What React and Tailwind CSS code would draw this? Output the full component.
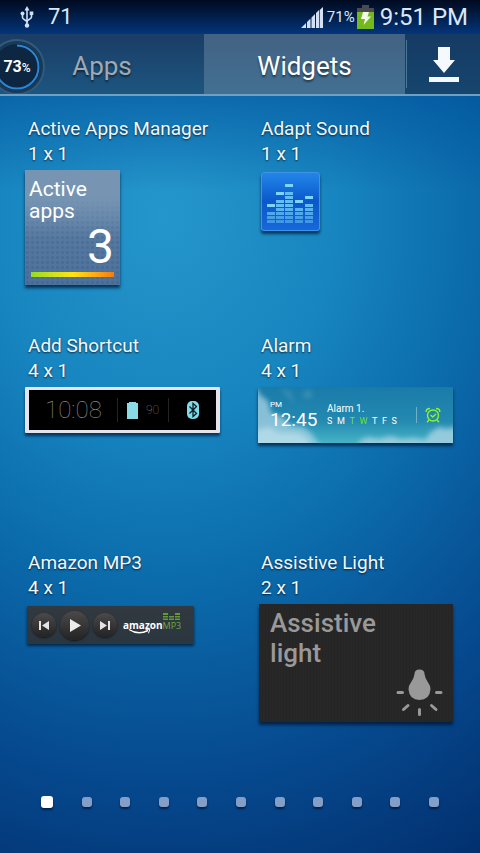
import { useState } from "react";

// Lit segments per column of the equalizer, as top offsets in the 60x60 icon
const EQ_COLUMNS = [
    { x: 7,  cells: [32, 40, 44, 48] },
    { x: 16, cells: [20, 28, 32, 36, 40, 44, 48] },
    { x: 25, cells: [12, 20, 24, 28, 32, 36, 40, 44, 48] },
    { x: 35, cells: [28, 36, 40, 44, 48] },
    { x: 45, cells: [24, 32, 36, 40, 44, 48] },
];

const DAYS = [
    { id: "sun", label: "S", on: false },
    { id: "mon", label: "M", on: false },
    { id: "tue", label: "T", on: true },
    { id: "wed", label: "W", on: true },
    { id: "thu", label: "T", on: false },
    { id: "fri", label: "F", on: false },
    { id: "sat", label: "S", on: false },
];

const PAGES = Array.from({ length: 11 }, (_, i) => i);

function UsbIcon() {
    return (
        <svg viewBox="0 0 14 22" className="w-[14px] h-[22px]" fill="none" stroke="#cfe0f5" strokeWidth="1.6">
            <path d="M7 4v15" />
            <path d="M2.5 8v3.5c0 2.500 4.500 2 4.500 5M11.500 8v3c0 2.500-4.500 2-4.500 5" />
            <path d="M7 0l2.500 4.500h-5z" fill="#cfe0f5" stroke="none" />
            <circle cx="2.500" cy="7.500" r="2" fill="#cfe0f5" stroke="none" />
            <path d="M9.700 5.500h3.600v3.600h-3.600z" fill="#cfe0f5" stroke="none" />
            <circle cx="7" cy="19.500" r="2.200" fill="#cfe0f5" stroke="none" />
        </svg>
    );
}

function SignalIcon() {
    return (
        <svg viewBox="0 0 22 21" className="w-[22px] h-[21px]" fill="#d3dff2">
            <path d="M0 21l5-5v5zM6 15l3.500-3.500V21H6zM10.500 10.500L14 7v14h-3.500zM15 6l3-3v18h-3zM18.700 3L22 0v21h-3.300z" />
        </svg>
    );
}

function BatteryIcon() {
    return (
        <svg viewBox="0 0 17 24" className="w-[17px] h-6">
            <path d="M5 0h7v3h5v4H0V3h5z" fill="#4a4a50" />
            <path d="M0 7h17v17H0z" fill="#73b81f" />
            <path d="M6 7h6l-1.500 4.500H14L6.500 20l1.500-6H4z" fill="#f2fbe8" />
        </svg>
    );
}

function StatusBar() {
    return (
        <header className="flex h-[34px] items-center bg-linear-to-b from-[#000b20] to-[#04357b] pl-5 pr-3 text-[#dbe7f8]">
            <UsbIcon />
            <span className="ml-[14px] text-[22px] leading-6">71</span>
            <div className="ml-auto flex items-center">
                <SignalIcon />
                <span className="ml-1 mr-[2px] text-[15px]">71%</span>
                <BatteryIcon />
                <span className="ml-[6px] text-2xl">9:51 PM</span>
            </div>
        </header>
    );
}

function Gauge() {
    return (
        <div className="absolute -left-[11px] top-[5px] flex size-14 items-center justify-center">
            <svg viewBox="0 0 56 56" className="absolute inset-0 size-14">
                <circle cx="28" cy="28" r="27" fill="#173a58" stroke="#335a7a" strokeWidth="2" />
                <circle cx="28" cy="28" r="23" fill="#0d2641" />
                <path d="M28 6.500A21.500 21.500 0 1 1 6.500 28" fill="none" stroke="#2c86d4" strokeWidth="2" />
            </svg>
            <span className="relative text-base font-bold text-white">
                73<span className="text-xs font-medium">%</span>
            </span>
        </div>
    );
}

function TabBar({ tab, onSelect }) {
    const base = "flex items-center justify-center pt-1 text-[26px] [text-shadow:0_2px_2px_rgba(0,0,0,0.5)] ";
    const on = "bg-[#7491a8]/45 text-white";
    const off = "text-[#9fa9b4]";

    return (
        <nav className="relative grid h-[62px] grid-cols-[204fr_201fr_75fr] overflow-hidden border-b-2 border-[#6f9fc2] bg-linear-to-b from-[#1a3d65] to-[#1c5680]">
            <button type="button" onClick={() => onSelect("apps")} className={base + (tab === "apps" ? on : off)}>
                Apps
            </button>
            <button type="button" onClick={() => onSelect("widgets")} className={base + (tab === "widgets" ? on : off)}>
                Widgets
            </button>
            <div className="flex items-center bg-[#123a63]/60">
                <span className="ml-px h-12 w-px bg-[#4c7698]" />
                <button type="button" aria-label="Downloaded apps" className="flex flex-1 justify-center">
                    <svg viewBox="0 0 30 36" className="h-9 w-[30px]" fill="#f5f9fd">
                        <path d="M9 1h12v13h5L15 27 4 14h5z" />
                        <path d="M0 31h30v5H0z" />
                    </svg>
                </button>
            </div>
            <Gauge />
        </nav>
    );
}

function ActiveApps() {
    return (
        <div className="mt-1 flex h-[115px] w-[95px] flex-col bg-[#54779f] bg-[linear-gradient(#7795b3_20%,transparent_60%),radial-gradient(rgba(30,60,110,0.16)_1px,transparent_2px),linear-gradient(#7795b3,#587aa1_50%,#4c719a)] bg-[size:100%_100%,5px_5px,100%_100%] px-1 pt-2 text-white shadow-[0_3px_3px_rgba(0,20,50,0.75)]">
            <p className="text-[21px] leading-[22px]">Active<br />apps</p>
            <p className="pr-[2px] text-right text-5xl leading-[50px]">3</p>
            <div className="ml-[2px] h-[5px] w-[83px] bg-linear-to-r from-[#93dc22] via-[#ffe311] to-[#f47a12]" />
        </div>
    );
}

function AdaptSound() {
    return (
        <div className="ml-[3px] mt-[6px] size-[59px] rounded-[3px] border border-[#3d92ea] bg-linear-to-b from-[#2385e8] via-[#0b58cb] to-[#1768d8] shadow-[0_3px_3px_rgba(0,20,50,0.7)]">
            <svg viewBox="1 1 57 57" className="size-full">
                {EQ_COLUMNS.map(col => col.cells.map((y, i) => (
                    <rect
                        key={`${col.x}-${y}`}
                        x={col.x - 1}
                        y={y}
                        width="8"
                        height="3"
                        fill={i === 0 ? "#7fd4fb" : "#62bdf4"}
                        opacity={y < 36 ? 1 : 1 - (y - 32) / 38}
                    />
                )))}
            </svg>
        </div>
    );
}

function AddShortcut() {
    return (
        <div className="mt-1 flex h-[46px] items-center rounded-[1px] border-x-4 border-y-[3px] border-[#e6e4ea] bg-black shadow-[0_3px_3px_rgba(0,20,50,0.7)]">
            <span className="flex-1 pl-4 font-thin text-2xl text-[#8a8a8a]">10:08</span>
            <span className="h-6 w-px bg-[#242424]" />
            <div className="flex w-[50px] items-center justify-center gap-2">
                <svg viewBox="0 0 11 17" className="h-[17px] w-[11px]" fill="#8bdbe6">
                    <path d="M2 0h7v1h2v16H0V1h2z" />
                </svg>
                <span className="font-thin text-xs text-[#858585]">90</span>
            </div>
            <span className="h-6 w-px bg-[#242424]" />
            <div className="flex w-[47px] justify-center">
                <svg viewBox="0 0 12 18" className="h-[18px] w-3">
                    <rect width="12" height="18" rx="5" fill="#7edbea" />
                    <path d="M2.500 5.500l7 7L6 15.500v-13l3.500 3-7 7" fill="none" stroke="#0a1c20" strokeWidth="1.300" />
                </svg>
            </div>
        </div>
    );
}

function Sky() {
    return (
        <svg viewBox="0 0 194 56" preserveAspectRatio="none" className="absolute inset-0 size-full">
            <defs>
                <linearGradient id="sky" x1="0" y1="0" x2="0" y2="1">
                    <stop offset="0" stopColor="#1a7ba9" />
                    <stop offset="0.6" stopColor="#2389b0" />
                    <stop offset="1" stopColor="#45b3c5" />
                </linearGradient>
                <filter id="soft" x="-20%" y="-20%" width="140%" height="140%">
                    <feGaussianBlur stdDeviation="2.500" />
                </filter>
            </defs>
            <path d="M0 0h194v56H0z" fill="url(#sky)" />
            <g filter="url(#soft)" fill="#a9d3e3">
                <path d="M-8 0q8 0 10 8l8 6 3 12 12 4 6 8 14 2 8 6 4 6 6 8H-8z" opacity="0.750" />
                <path d="M98 62l4-9 8-3 10 2 12-3 10 3 14-1 10 2 6-8 8-5 8 2 6-2 6 2v22z" opacity="0.800" />
                <path d="M-4 44l14-4 12 6 16 0 12 6v10H-4z" fill="#d2e9f1" opacity="0.500" />
                <path d="M22 2l10 2 4 14-6-8zM44 6l8-4 2 8-6 2z" opacity="0.200" />
            </g>
        </svg>
    );
}

function Alarm() {
    return (
        <div className="relative mt-1 h-14 overflow-hidden shadow-[0_3px_3px_rgba(0,20,50,0.7)]">
            <Sky />
            <div className="relative flex h-full items-center pl-3 text-white">
                <div className="w-[57px]">
                    <p className="text-[8px] leading-[10px]">PM</p>
                    <p className="text-[19px] leading-5">12:45</p>
                </div>
                <div className="flex-1">
                    <p className="text-[10px] leading-3">Alarm 1.</p>
                    <p className="flex w-[70px] justify-between text-[9px] leading-3">
                        {DAYS.map(d => (
                            <span key={d.id} className={d.on ? "text-[#6be32a]" : ""}>{d.label}</span>
                        ))}
                    </p>
                </div>
                <span className="h-4 w-px bg-[#6fb0cb]" />
                <svg viewBox="0 0 16 16" className="ml-2 mr-3 size-4" fill="none" stroke="#8cf52a" strokeWidth="1.400">
                    <circle cx="8" cy="8.500" r="5.500" />
                    <path d="M5.500 8l2.200 2L11 7M1.200 5Q1 1.500 5 1.500M14.800 5Q15 1.500 11 1.500M4 13l-2 2.300M12 13l2 2.300" />
                </svg>
            </div>
        </div>
    );
}

function AmazonLogo() {
    return (
        <div className="relative ml-[6px] flex items-baseline pt-px leading-4 font-['Open_Sans',sans-serif]">
            <span className="text-[10px] font-bold text-white">amazon</span>
            <span className="text-[9px] text-[#6dab3c]">MP3</span>
            <svg viewBox="0 0 60 24" className="absolute -top-1 left-0 h-6 w-[60px]">
                <path d="M6 17.500q9 6 19 1" fill="none" stroke="#fff" strokeWidth="1.400" />
                <path d="M22.500 17.300h4.300l-1.300 4" fill="none" stroke="#fff" strokeWidth="1" />
                <path d="M40 1h5v2h-5zM40 4h5v1.500h-5zM40 6.500h5V8h-5zM46 4h5v1.500h-5zM46 6.500h5V8h-5zM52 1h5v2h-5zM52 4h5v1.500h-5zM52 6.500h5V8h-5z" fill="#5f9a37" />
            </svg>
        </div>
    );
}

function AmazonMp3() {
    const knob = "flex items-center justify-center rounded-full bg-linear-to-b from-[#4b494a] to-[#252425] shadow-[0_1px_2px_rgba(0,0,0,0.6)] ";

    return (
        <div className="ml-[2px] mt-[6px] flex h-[38px] w-[167px] items-center rounded-[1px] bg-linear-to-b from-[#32393f] to-[#2a3640] pl-[5px] shadow-[0_2px_3px_rgba(0,15,40,0.7)]">
            <button type="button" aria-label="Previous" className={knob + "size-6"}>
                <svg viewBox="0 0 10 9" className="h-[9px] w-[10px]" fill="#e4e4e4">
                    <path d="M0 0h2v9H0zM10 0v9L3 4.500z" />
                </svg>
            </button>
            <button type="button" aria-label="Play" className={knob + "ml-1 size-[29px]"}>
                <svg viewBox="0 0 11 13" className="ml-[2px] h-[13px] w-[11px]" fill="#ececec">
                    <path d="M0 0l11 6.500L0 13z" />
                </svg>
            </button>
            <button type="button" aria-label="Next" className={knob + "ml-1 size-6"}>
                <svg viewBox="0 0 10 9" className="h-[9px] w-[10px]" fill="#e4e4e4">
                    <path d="M0 0l7 4.500L0 9zM8 0h2v9H8z" />
                </svg>
            </button>
            <AmazonLogo />
        </div>
    );
}

function AssistiveLight() {
    return (
        <div className="relative ml-px mt-1 h-[118px] bg-[#272727] bg-[repeating-linear-gradient(90deg,rgba(0,0,0,0.06)_0_1px,transparent_1px_3px)] px-[11px] pt-1 shadow-[0_3px_3px_rgba(0,15,40,0.7)]">
            <p className="text-[26px] leading-[30px] font-medium text-[#999]">Assistive<br />light</p>
            <svg viewBox="0 0 48 48" className="absolute bottom-[6px] right-[9px] size-12" fill="#999">
                <path d="M18.500 6q0-4.500 5-4.500T28.500 6q.5 4 3 7.500 3 4 3 8-1 10.500-11 10.500t-11-10.500q0-4 3-8Q18 10 18.500 6z" />
                <path d="M2 24.500h4.500M40.500 24.500H45M12 37.500l-4.500 4M35.500 37.500l4.500 4M23.500 41.500v5" fill="none" stroke="#999" strokeWidth="3" strokeLinecap="round" />
            </svg>
        </div>
    );
}

const WIDGETS = [
    { name: "Active Apps Manager", size: "1 x 1", Preview: ActiveApps },
    { name: "Adapt Sound",         size: "1 x 1", Preview: AdaptSound },
    { name: "Add Shortcut",        size: "4 x 1", Preview: AddShortcut },
    { name: "Alarm",               size: "4 x 1", Preview: Alarm },
    { name: "Amazon MP3",          size: "4 x 1", Preview: AmazonMp3 },
    { name: "Assistive Light",     size: "2 x 1", Preview: AssistiveLight },
];

export default function App() {
    const [tab, setTab] = useState("widgets");
    const [page, setPage] = useState(0);

    return (
        <div className="flex min-h-screen flex-col bg-[#02306f] bg-[linear-gradient(rgba(0,80,155,0.6)_90px,rgba(0,80,155,0)_190px),radial-gradient(620px_740px_at_34%_215px,#2596cb,#1785bf_28%,#0b6bab_50%,#06498e_76%,#02306f)] font-['Roboto',sans-serif]">
            <StatusBar />
            <TabBar tab={tab} onSelect={setTab} />

            <main className="grid auto-rows-[217px] grid-cols-2 gap-x-[38px] pl-[25px] pr-[27px] pt-5">
                {WIDGETS.map(({ name, size, Preview }) => (
                    <section key={name}>
                        <h2 className="whitespace-nowrap pl-[3px] text-[19px] leading-[25px] text-[#f1f7fc] [text-shadow:0_1px_2px_rgba(0,0,0,0.7)]">
                            {name}<br />{size}
                        </h2>
                        <Preview />
                    </section>
                ))}
            </main>

            {/* Page dots */}
            <div className="mt-auto flex items-center justify-between px-[41px] pb-[45px]">
                {PAGES.map(i => (
                    <button
                        key={i}
                        type="button"
                        aria-label={`Page ${i + 1}`}
                        onClick={() => setPage(i)}
                        className={`rounded-[3px] shadow-[0_2px_2px_rgba(0,10,40,0.6)] ${page === i ? "size-3 bg-white" : "size-[10px] bg-[#839fc8]"}`}
                    />
                ))}
            </div>
        </div>
    );
}
